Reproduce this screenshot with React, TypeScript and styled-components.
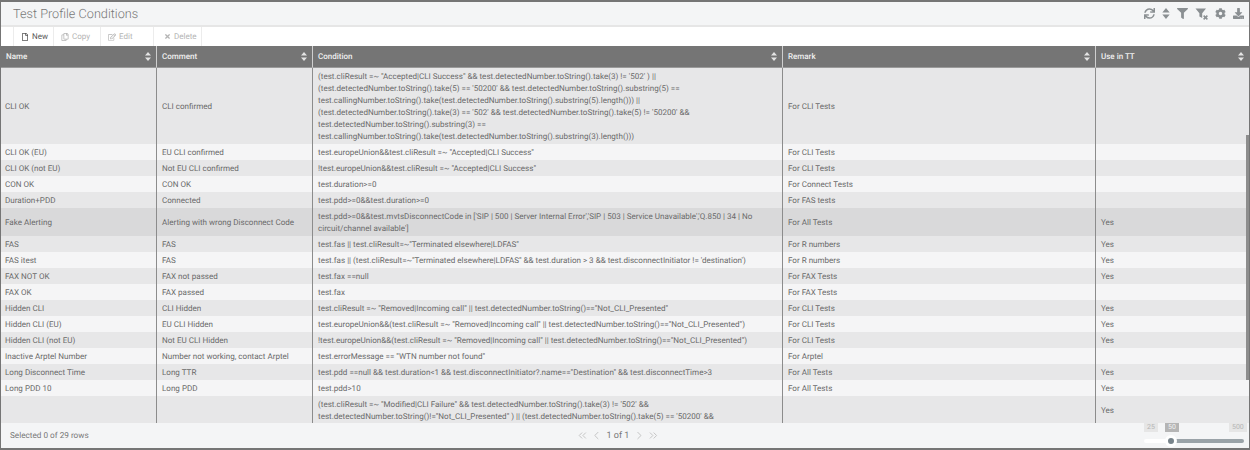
import React from 'react';
import styled, { createGlobalStyle } from 'styled-components';
import { ChevronsLeft, ChevronLeft, ChevronRight, ChevronsRight } from 'lucide-react';
import { FaSync, FaFilter, FaCog, FaDownload, FaRegFile, FaRegCopy, FaRegEdit, FaTimes } from 'react-icons/fa';

const GlobalStyle = createGlobalStyle`
    html, body { margin: 0; padding: 0; background: #fff; }
    body { font-family: Roboto, "Liberation Sans", sans-serif; text-rendering: geometricPrecision; }
`;

const Page = styled.div`
    width: 1250px;
    height: 450px;
    box-sizing: border-box;
    border: 2px solid #757575;
    border-width: 2px 1px 2px 1px;
    display: flex;
    flex-direction: column;
    overflow: hidden;
    position: relative;
`;

const TitleBar = styled.div`
    height: 25px;
    box-sizing: border-box;
    flex: none;
    background: #f4f5f6;
    border-bottom: 2px solid #e6e6e6;
    display: flex;
    align-items: center;
    justify-content: space-between;
    padding: 0 5px 0 12px;
`;

const Title = styled.div`
    font-size: 12.7px;
    font-weight: 300;
    color: #777;
    padding-top: 1px;
`;

const TitleIcons = styled.div`
    display: flex;
    align-items: center;
    gap: 7px;
    color: #8a8f92;
`;

const HeadSort = styled.svg`
    width: 8px;
    height: 11px;
    fill: currentColor;
`;

const Toolbar = styled.div`
    height: 19px;
    flex: none;
    display: flex;
    align-items: stretch;
    padding-left: 12px;
    background: #fff;
`;

const ToolButton = styled.div<{ $disabled?: boolean; $gap?: boolean; $width: number }>`
    display: flex;
    align-items: center;
    gap: 3px;
    box-sizing: border-box;
    width: ${(p) => p.$width}px;
    font-size: 8px;
    color: ${(p) => (p.$disabled ? '#b4b4b4' : '#555')};
    border-left: 1px solid #ececec;
    border-right: ${(p) => (p.$gap ? '1px solid #ececec' : 'none')};
    margin-left: ${(p) => (p.$gap ? '14px' : '0')};
    padding-left: ${(p) => (p.$gap ? '10px' : '7px')};
`;

const TableWrap = styled.div`
    flex: 1;
    min-height: 0;
    overflow: hidden;
`;

const Table = styled.table`
    width: 1248px;
    table-layout: fixed;
    border-collapse: separate;
    border-spacing: 0;
`;

const Th = styled.th`
    height: 22px;
    padding: 0 5px;
    box-sizing: border-box;
    background: #757575;
    color: #f0f0f0;
    font-size: 8px;
    font-weight: 500;
    text-align: left;
    border-left: 1px solid #cfcfcf;
    border-bottom: 1px solid #9a9a9a;
    &:first-child { border-left: none; }
`;

const HeadCell = styled.div`
    display: flex;
    align-items: center;
    justify-content: space-between;
`;

const SortMark = styled.svg`
    width: 6px;
    height: 9px;
    fill: #e4e4e4;
    flex: none;
`;

const Row = styled.tr<{ $tone: 'odd' | 'even' | 'dark' }>`
    background: ${(p) => (p.$tone === 'even' ? '#f5f5f6' : p.$tone === 'dark' ? '#d9d9da' : '#e7e7e8')};
`;

const Td = styled.td`
    padding: 3px 5px 1px;
    box-sizing: border-box;
    font-size: 8.05px;
    line-height: 12px;
    color: #6a6a6a;
    vertical-align: middle;
    border-left: 1px solid #8c8c8c;
    &:first-child { border-left: none; padding-left: 4px; }
`;

const Footer = styled.div`
    height: 25px;
    flex: none;
    background: #f4f5f6;
    display: grid;
    grid-template-columns: 566px 84px 1fr;
    align-items: center;
    padding-left: 9px;
    font-size: 8.2px;
    color: #777;
`;

const Pager = styled.div`
    display: flex;
    align-items: center;
    justify-content: center;
    gap: 1px;
    color: #b9b9b9;
    span { color: #777; margin: 0 3px; font-size: 9px; white-space: nowrap; }
`;

const SizeBox = styled.div`
    justify-self: end;
    align-self: start;
    width: 100px;
    margin-right: 5px;
    display: flex;
    flex-direction: column;
    gap: 7px;
`;

const SizeLabels = styled.div`
    display: grid;
    grid-template-columns: 21px 64px 15px;
    font-size: 7px;
`;

const SizeLabel = styled.div<{ $active?: boolean }>`
    justify-self: start;
    padding: 0 3px;
    line-height: 9px;
    background: ${(p) => (p.$active ? '#b5b5b5' : '#e6e6e6')};
    color: ${(p) => (p.$active ? '#f4f4f4' : '#b5b5b5')};
`;

const SliderTrack = styled.div`
    position: relative;
    height: 4px;
    border-radius: 2px;
    background: linear-gradient(to right, #fff 0 27%, #9aa3a8 27% 100%);
`;

const SliderThumb = styled.div`
    position: absolute;
    left: 21px;
    top: -4px;
    width: 6px;
    height: 6px;
    box-sizing: content-box;
    border: 3px solid #fff;
    border-radius: 50%;
    background: #78848b;
`;

const ScrollThumb = styled.div`
    position: absolute;
    right: 0;
    top: 133px;
    width: 3px;
    height: 245px;
    background: #8d8d8d;
`;

const rows: { tone: 'odd' | 'even' | 'dark'; cells: React.ReactNode[] }[] = [
    {
        tone: 'odd',
        cells: [
            'CLI OK',
            'CLI confirmed',
            <>
                (test.cliResult =~ "Accepted|CLI Success" &amp;&amp; test.detectedNumber.toString().take(3) != '502' ) ||<br />
                (test.detectedNumber.toString().take(5) == '50200' &amp;&amp; test.detectedNumber.toString().substring(5) ==<br />
                test.callingNumber.toString().take(test.detectedNumber.toString().substring(5).length())) ||<br />
                (test.detectedNumber.toString().take(3) == '502' &amp;&amp; test.detectedNumber.toString().take(5) != '50200' &amp;&amp;<br />
                test.detectedNumber.toString().substring(3) ==<br />
                test.callingNumber.toString().take(test.detectedNumber.toString().substring(3).length()))
            </>,
            'For CLI Tests',
            '',
        ],
    },
    { tone: 'even', cells: ['CLI OK (EU)', 'EU CLI confirmed', 'test.europeUnion&&test.cliResult =~ "Accepted|CLI Success"', 'For CLI Tests', ''] },
    { tone: 'odd', cells: ['CLI OK (not EU)', 'Not EU CLI confirmed', '!test.europeUnion&&test.cliResult =~ "Accepted|CLI Success"', 'For CLI Tests', ''] },
    { tone: 'even', cells: ['CON OK', 'CON OK', 'test.duration>=0', 'For Connect Tests', ''] },
    { tone: 'odd', cells: ['Duration+PDD', 'Connected', 'test.pdd>=0&&test.duration>=0', 'For FAS tests', ''] },
    {
        tone: 'dark',
        cells: [
            'Fake Alerting',
            'Alerting with wrong Disconnect Code',
            <>
                test.pdd&gt;=0&amp;&amp;test.mvtsDisconnectCode in ['SIP | 500 | Server Internal Error','SIP | 503 | Service Unavailable','Q.850 | 34 | No<br />
                circuit/channel available']
            </>,
            'For All Tests',
            'Yes',
        ],
    },
    { tone: 'odd', cells: ['FAS', 'FAS', 'test.fas || test.cliResult=~"Terminated elsewhere|LDFAS"', 'For R numbers', 'Yes'] },
    { tone: 'even', cells: ['FAS itest', 'FAS', 'test.fas || (test.cliResult=~"Terminated elsewhere|LDFAS" && test.duration > 3 && test.disconnectInitiator != \'destination\')', 'For R numbers', 'Yes'] },
    { tone: 'odd', cells: ['FAX NOT OK', 'FAX not passed', 'test.fax ==null', 'For FAX Tests', 'Yes'] },
    { tone: 'even', cells: ['FAX OK', 'FAX passed', 'test.fax', 'For FAX Tests', ''] },
    { tone: 'odd', cells: ['Hidden CLI', 'CLI Hidden', 'test.cliResult =~ "Removed|Incoming call" || test.detectedNumber.toString()=="Not_CLI_Presented"', 'For CLI Tests', 'Yes'] },
    { tone: 'even', cells: ['Hidden CLI (EU)', 'EU CLI Hidden', 'test.europeUnion&&(test.cliResult =~ "Removed|Incoming call" || test.detectedNumber.toString()=="Not_CLI_Presented")', 'For CLI Tests', 'Yes'] },
    { tone: 'odd', cells: ['Hidden CLI (not EU)', 'Not EU CLI Hidden', '!test.europeUnion&&(test.cliResult =~ "Removed|Incoming call" || test.detectedNumber.toString()=="Not_CLI_Presented")', 'For CLI Tests', 'Yes'] },
    { tone: 'even', cells: ['Inactive Arptel Number', 'Number not working, contact Arptel', 'test.errorMessage == "WTN number not found"', 'For Arptel', ''] },
    { tone: 'odd', cells: ['Long Disconnect Time', 'Long TTR', 'test.pdd ==null && test.duration<1 && test.disconnectInitiator?.name=="Destination" && test.disconnectTime>3', 'For All Tests', 'Yes'] },
    { tone: 'even', cells: ['Long PDD 10', 'Long PDD', 'test.pdd>10', 'For All Tests', 'Yes'] },
    {
        tone: 'odd',
        cells: [
            '',
            '',
            <>
                (test.cliResult =~ "Modified|CLI Failure" &amp;&amp; test.detectedNumber.toString().take(3) != '502' &amp;&amp;<br />
                test.detectedNumber.toString()!="Not_CLI_Presented" ) || (test.detectedNumber.toString().take(5) == '50200' &amp;&amp;
            </>,
            '',
            'Yes',
        ],
    },
];

const columns = [
    { name: 'Name', width: 155 },
    { name: 'Comment', width: 156 },
    { name: 'Condition', width: 470 },
    { name: 'Remark', width: 313 },
    { name: 'Use in TT', width: 154 },
];

const Sort = () => (
    <SortMark viewBox="0 0 6 9">
        <path d="M3 0 6 3.6H0zM3 9 0 5.4h6z" />
    </SortMark>
);

const FunnelCrossed = () => (
    <svg width="13" height="13" viewBox="0 0 13 13" fill="currentColor">
        <path d="M0.5 1.5h10.5L7.2 6.2V11L4.4 9.4V6.2z" />
        <path d="M8.6 8.6 12.4 12.4M12.4 8.6 8.6 12.4" stroke="currentColor" strokeWidth="1.5" />
    </svg>
);

export default function App() {
    return (
        <Page>
            <GlobalStyle />
            <TitleBar>
                <Title>Test Profile Conditions</Title>
                <TitleIcons>
                    <FaSync size={11} />
                    <HeadSort viewBox="0 0 6 9"><path d="M3 0 6 3.6H0zM3 9 0 5.4h6z" /></HeadSort>
                    <FaFilter size={11} />
                    <FunnelCrossed />
                    <FaCog size={11} />
                    <FaDownload size={11} />
                </TitleIcons>
            </TitleBar>
            <Toolbar>
                <ToolButton $width={40}><FaRegFile size={8} />New</ToolButton>
                <ToolButton $disabled $width={47}><FaRegCopy size={8} />Copy</ToolButton>
                <ToolButton $disabled $width={39}><FaRegEdit size={8} />Edit</ToolButton>
                <ToolButton $disabled $gap $width={49}><FaTimes size={7} />Delete</ToolButton>
            </Toolbar>
            <TableWrap>
                <Table>
                    <colgroup>
                        {columns.map((c) => <col key={c.name} style={{ width: c.width }} />)}
                    </colgroup>
                    <thead>
                        <tr>
                            {columns.map((c) => (
                                <Th key={c.name}>
                                    <HeadCell>{c.name}<Sort /></HeadCell>
                                </Th>
                            ))}
                        </tr>
                    </thead>
                    <tbody>
                        {rows.map((r, i) => (
                            <Row key={i} $tone={r.tone}>
                                {r.cells.map((cell, j) => <Td key={j}>{cell}</Td>)}
                            </Row>
                        ))}
                    </tbody>
                </Table>
            </TableWrap>
            <ScrollThumb />
            <Footer>
                <div>Selected 0 of 29 rows</div>
                <Pager>
                    <ChevronsLeft size={13} strokeWidth={1.5} />
                    <ChevronLeft size={13} strokeWidth={1.5} />
                    <span>1 of 1</span>
                    <ChevronRight size={13} strokeWidth={1.5} />
                    <ChevronsRight size={13} strokeWidth={1.5} />
                </Pager>
                <SizeBox>
                    <SizeLabels>
                        <SizeLabel>25</SizeLabel>
                        <SizeLabel $active>50</SizeLabel>
                        <SizeLabel>500</SizeLabel>
                    </SizeLabels>
                    <SliderTrack><SliderThumb /></SliderTrack>
                </SizeBox>
            </Footer>
        </Page>
    );
}
